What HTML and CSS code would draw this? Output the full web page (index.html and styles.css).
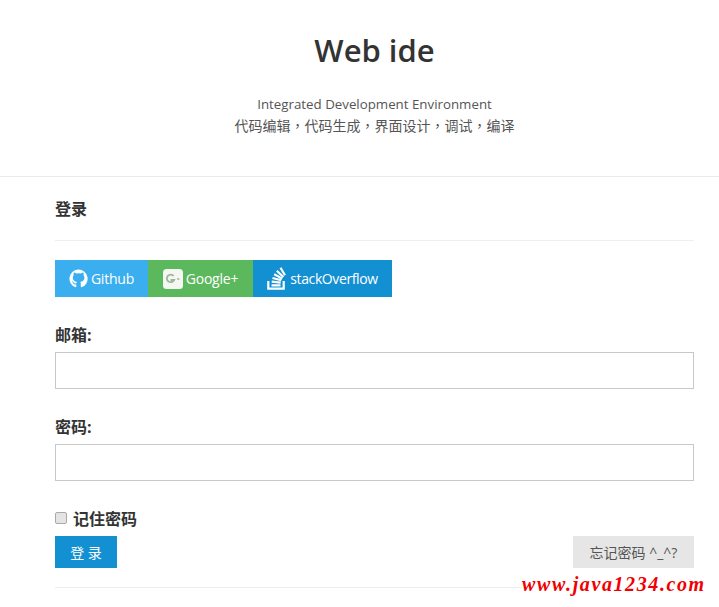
FILE: index.html
```html
<!DOCTYPE html>
<html lang="zh-CN">
<head>
<meta charset="utf-8">
<title>Web ide</title>
<link rel="stylesheet" href="styles.css">
</head>
<body>
<header class="hero">
  <h1 class="hero-title">Web ide</h1>
  <p class="hero-sub hero-sub-en">Integrated Development Environment</p>
  <p class="hero-sub" lang="zh-TW">代码编辑，代码生成，界面设计，调试，编译</p>
</header>
<main class="panel">
  <h2 class="panel-title">登录</h2>
  <div class="socials">
    <a class="social social-github">
      <svg class="social-icon" viewBox="0 0 20 20"><path fill="#fff" d="M10 .6a9.600 9.600 0 0 0-3 18.700c.5.100.7-.2.700-.5v-2.500c-2.700.6-3.200-1.200-3.200-1.200-.5-1.100-1.100-1.400-1.100-1.400-.9-.6.100-.6.100-.6 1 .1 1.500 1 1.500 1 .9 1.500 2.300 1.100 2.800.8.100-.6.300-1.100.6-1.300-2.100-.2-4.400-1.100-4.400-4.800 0-1 .4-1.900 1-2.600-.1-.2-.4-1.200.1-2.500 0 0 .8-.3 2.600 1a9 9 0 0 1 4.800 0c1.800-1.300 2.600-1 2.600-1 .5 1.300.2 2.300.1 2.500.6.700 1 1.600 1 2.600 0 3.700-2.300 4.600-4.400 4.800.3.300.6.800.6 1.700v3.500c0 .3.200.6.700.5A9.600 9.600 0 0 0 10 .6z"/></svg>
      Github
    </a>
    <a class="social social-google">
      <svg class="social-icon social-icon-google" viewBox="0 0 20 20"><rect x="0" y="0" width="20" height="20" rx="3.500" fill="#f4f7f2"/><path fill="none" stroke="#9db59a" stroke-width="1.800" d="M10.600 6.900A3.800 3.800 0 1 0 11.100 11H7.600"/><path stroke="#9db59a" stroke-width="1.400" d="M14 10h2.500"/></svg>
      Google+
    </a>
    <a class="social social-stack">
      <svg class="social-icon social-icon-stack" viewBox="0 0 20 23"><path fill="none" stroke="#fff" stroke-width="2.200" d="M1.300 14v7.700h15.400V14M4.500 18.300h9M4.700 14.700l9 1M5.500 11l8.800 2.300M7.200 7.300l8 4.300M9.800 3.700l6.600 6.300M13.500 .8l4.500 7.500"/></svg>
      stackOverflow
    </a>
  </div>
  <form class="login">
    <div class="field">
      <label class="field-label" for="email">邮箱:</label>
      <input class="field-input" id="email" type="text">
    </div>
    <div class="field">
      <label class="field-label" for="pass">密码:</label>
      <input class="field-input" id="pass" type="password">
    </div>
    <label class="remember"><input class="remember-box" type="checkbox">记住密码</label>
    <div class="actions">
      <button class="btn btn-primary" type="button">登 录</button>
      <button class="btn btn-muted" type="button">忘记密码 ^_^?</button>
    </div>
  </form>
  <hr class="rule-end">
</main>
<div class="watermark">www.java1234.com</div>
</body>
</html>
```

FILE: styles.css
```css
* { box-sizing: border-box; }
html, body { margin: 0; padding: 0; }
body {
  position: relative;
  height: 607px;
  overflow: hidden;
  background: #fff;
  color: #333;
  font-family: "Open Sans", "Noto Sans CJK SC", sans-serif;
}
.hero {
  height: 177px;
  padding: 29px 25px 0 55px;
  border-bottom: 1px solid #eaeaea;
  text-align: center;
}
.hero-title {
  margin: 0 0 22px;
  font-size: 31px;
  line-height: 42px;
  font-weight: 600;
  color: #333;
}
.hero-sub {
  margin: 0;
  font-size: 14px;
  line-height: 22px;
  color: #555;
  font-family: "Open Sans", "Noto Sans CJK TC", sans-serif;
}
.hero-sub-en { font-size: 13.3px; }
.panel { padding: 0 25px 0 55px; }
.panel-title {
  margin: 0 0 19px;
  padding: 21px 0 20px;
  height: 64px;
  border-bottom: 1px solid #eee;
  font-size: 16px;
  line-height: 22px;
  font-weight: 700;
  color: #333;
}
.socials { display: flex; height: 37px; }
.social {
  display: flex;
  align-items: center;
  justify-content: center;
  gap: 3px;
  color: #fff;
  font-size: 14px;
  letter-spacing: -0.2px;
}
.social-icon { width: 19px; height: 19px; flex: none; }
.social-icon-google { width: 20px; height: 20px; }
.social-icon-stack { width: 20px; height: 23px; }
.social-github { width: 93px; background: #3aaeee; }
.social-google { width: 105px; background: #5cb85c; }
.social-stack { width: 139px; background: #1290d2; letter-spacing: -0.4px; }
.login { margin-top: 26px; }
.field { margin-bottom: 26px; }
.field-label {
  display: block;
  height: 29px;
  font-size: 16px;
  line-height: 24px;
  font-weight: 700;
  color: #333;
}
.field-input {
  display: block;
  width: 100%;
  height: 37px;
  border: 1px solid #c8c8c8;
  background: #fff;
  outline: none;
}
.remember {
  display: flex;
  align-items: center;
  height: 24px;
  margin-top: -1px;
  font-size: 16px;
  font-weight: 700;
  color: #333;
}
.remember-box {
  appearance: none;
  width: 12px;
  height: 12px;
  margin: 0 6px 0 0;
  border: 1px solid #a9a9a9;
  border-radius: 2px;
  background: #e4e4e4;
}
.actions {
  display: flex;
  justify-content: space-between;
  margin-top: 6px;
}
.btn {
  height: 32px;
  border: 0;
  font-family: inherit;
  font-size: 14px;
  padding: 0;
}
.btn-primary { width: 62px; background: #1290d2; color: #fff; }
.btn-muted { width: 121px; background: #e6e6e6; color: #555; }
.rule-end {
  margin: 19px 0 0;
  border: 0;
  border-top: 1px solid #eee;
}
.watermark {
  position: absolute;
  left: 522px;
  top: 573px;
  font-family: "Liberation Serif", serif;
  font-size: 20px;
  line-height: 22px;
  letter-spacing: 1.600px;
  font-weight: 700;
  font-style: italic;
  color: #f00000;
  background: #fff;
}
```
